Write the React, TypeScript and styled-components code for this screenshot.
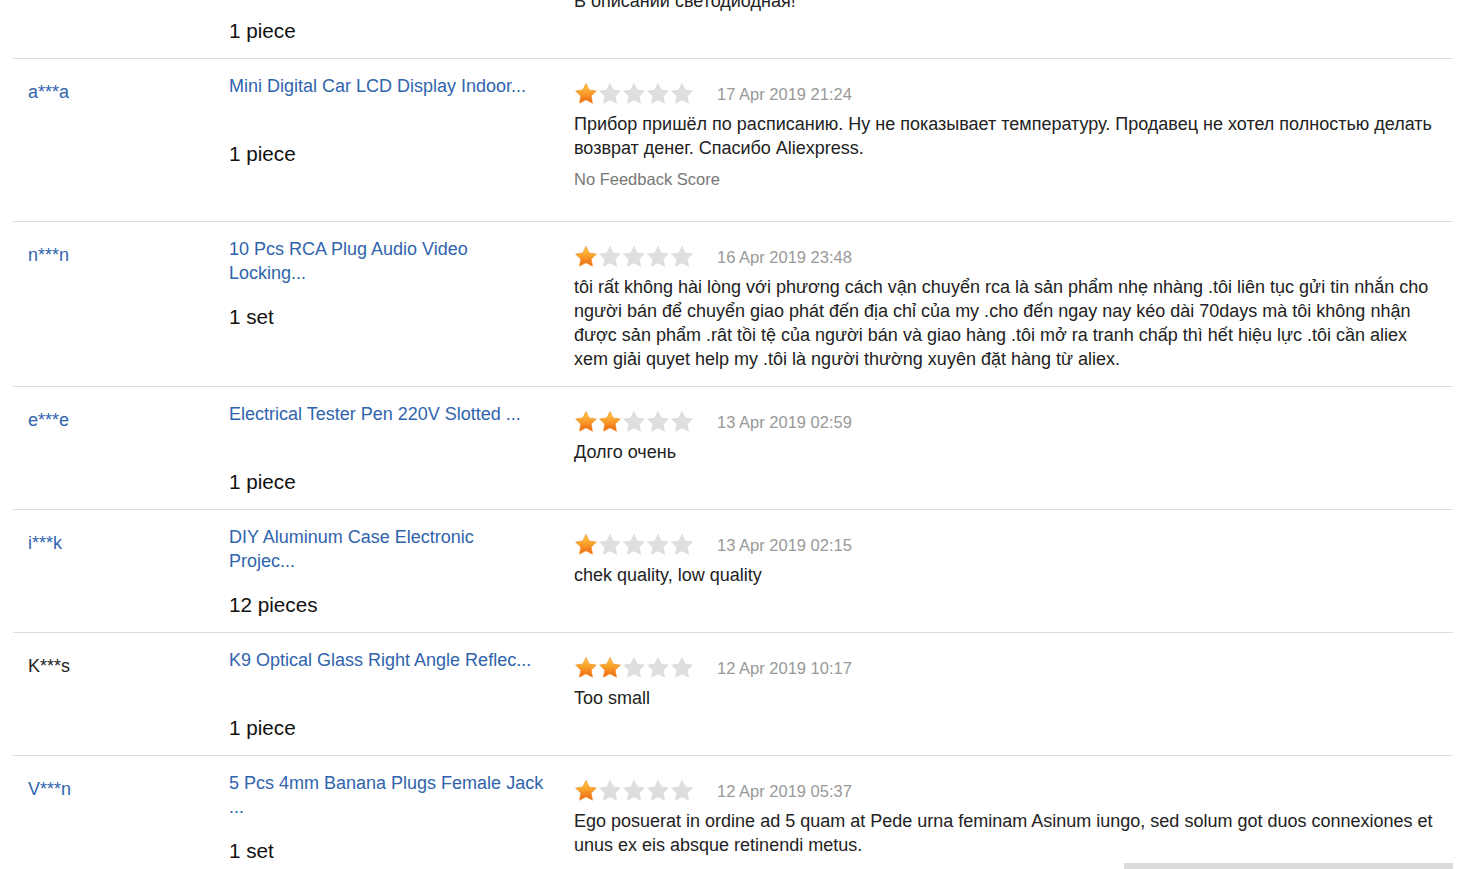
import React from 'react'
import styled, { createGlobalStyle } from 'styled-components'

type Review = {
  buyer: string
  buyerLink?: boolean
  product: string
  quantity: string
  rating: number
  date: string
  text: string
  noScore?: boolean
}

const reviews: Review[] = [
  {
    buyer: 'o***a',
    buyerLink: true,
    product: 'LED Indicator Lamp 12V Panel...',
    quantity: '1 piece',
    rating: 1,
    date: '18 Apr 2019 09:12',
    text: 'В описании светодиодная!',
  },
  {
    buyer: 'a***a',
    buyerLink: true,
    product: 'Mini Digital Car LCD Display Indoor...',
    quantity: '1 piece',
    rating: 1,
    date: '17 Apr 2019 21:24',
    text: 'Прибор пришёл по расписанию. Ну не показывает температуру. Продавец не хотел полностью делать возврат денег. Спасибо Aliexpress.',
    noScore: true,
  },
  {
    buyer: 'n***n',
    buyerLink: true,
    product: '10 Pcs RCA Plug Audio Video Locking...',
    quantity: '1 set',
    rating: 1,
    date: '16 Apr 2019 23:48',
    text: 'tôi rất không hài lòng với phương cách vận chuyển rca là sản phẩm nhẹ nhàng .tôi liên tục gửi tin nhắn cho người bán để chuyển giao phát đến địa chỉ của my .cho đến ngay nay kéo dài 70days mà tôi không nhận được sản phẩm .rât tồi tệ của người bán và giao hàng .tôi mở ra tranh chấp thì hết hiệu lực .tôi cần aliex xem giải quyet help my .tôi là người thường xuyên đặt hàng từ aliex.',
  },
  {
    buyer: 'e***e',
    buyerLink: true,
    product: 'Electrical Tester Pen 220V Slotted ...',
    quantity: '1 piece',
    rating: 2,
    date: '13 Apr 2019 02:59',
    text: 'Долго очень',
  },
  {
    buyer: 'i***k',
    buyerLink: true,
    product: 'DIY Aluminum Case Electronic Projec...',
    quantity: '12 pieces',
    rating: 1,
    date: '13 Apr 2019 02:15',
    text: 'chek quality, low quality',
  },
  {
    buyer: 'K***s',
    product: 'K9 Optical Glass Right Angle Reflec...',
    quantity: '1 piece',
    rating: 2,
    date: '12 Apr 2019 10:17',
    text: 'Too small',
  },
  {
    buyer: 'V***n',
    buyerLink: true,
    product: '5 Pcs 4mm Banana Plugs Female Jack ...',
    quantity: '1 set',
    rating: 1,
    date: '12 Apr 2019 05:37',
    text: 'Ego posuerat in ordine ad 5 quam at Pede urna feminam Asinum iungo, sed solum got duos connexiones et unus ex eis absque retinendi metus.',
  },
]

const GlobalStyle = createGlobalStyle`
  html, body {
    margin: 0;
    padding: 0;
    background: #fff;
    overflow: hidden;
  }
  body {
    font-family: "Liberation Sans", Arial, sans-serif;
    color: #222;
  }
`

const Star = ({ filled, id }: { filled: boolean; id: string }) => (
  <svg width="24" height="24" viewBox="0 0 24 24">
    <defs>
      <linearGradient id={id} x1="0" y1="0" x2="0" y2="1">
        <stop offset="0" stopColor="#ffc947" />
        <stop offset="0.45" stopColor="#f9a22c" />
        <stop offset="1" stopColor="#ec640e" />
      </linearGradient>
    </defs>
    <path
      d="M12 1.4l3.2 6.6 7.2 1-5.2 5 1.3 7.2L12 17.8l-6.5 3.4 1.3-7.2-5.2-5 7.2-1z"
      fill={filled ? `url(#${id})` : '#dedede'}
      stroke={filled ? '#ef8a1e' : '#d6d6d6'}
      strokeWidth="0.6"
      strokeLinejoin="round"
    />
  </svg>
)

const Stars = ({ rating, rowKey }: { rating: number; rowKey: number }) => (
  <StarRow>
    {[0, 1, 2, 3, 4].map((i) => (
      <Star key={i} filled={i < rating} id={`sg-${rowKey}-${i}`} />
    ))}
  </StarRow>
)

export default function App() {
  return (
    <>
      <GlobalStyle />
      <Feedback>
        {reviews.map((r, i) => (
          <Row key={i}>
            <Buyer $link={!!r.buyerLink}>{r.buyer}</Buyer>
            <ProductCell>
              <ProductLink href="#">{r.product}</ProductLink>
              <Quantity>{r.quantity}</Quantity>
            </ProductCell>
            <ReviewCell>
              <ReviewHead>
                <Stars rating={r.rating} rowKey={i} />
                <DateText>{r.date}</DateText>
              </ReviewHead>
              <ReviewText>{r.text}</ReviewText>
              {r.noScore && <NoScore>No Feedback Score</NoScore>}
            </ReviewCell>
          </Row>
        ))}
      </Feedback>
      <ScrollTrack />
    </>
  )
}

const Feedback = styled.div`
  width: 1440px;
  margin: -64px 0 0 13px;
`

const Row = styled.div`
  display: grid;
  grid-template-columns: 201px 345px 866px;
  padding: 15px 0 13px 15px;
  border-bottom: 1px solid #dedede;
`

const Buyer = styled.div<{ $link: boolean }>`
  font-size: 18px;
  line-height: 24px;
  margin-top: 6px;
  color: ${({ $link }) => ($link ? '#3065ae' : '#222')};
`

const ProductCell = styled.div`
  display: flex;
  flex-direction: column;
`

const ProductLink = styled.a`
  display: block;
  width: 315px;
  min-height: 48px;
  font-size: 18px;
  line-height: 24px;
  color: #2f64ad;
  text-decoration: none;
`

const Quantity = styled.div`
  margin-top: 18px;
  font-size: 20.7px;
  line-height: 28px;
  color: #111;
`

const ReviewCell = styled.div`
  display: flex;
  flex-direction: column;
`

const ReviewHead = styled.div`
  display: flex;
  align-items: center;
  height: 24px;
  margin: 8px 0 6px;
`

const StarRow = styled.div`
  display: flex;
  margin-right: 23px;
`

const DateText = styled.span`
  font-size: 16.5px;
  color: #999;
`

const ReviewText = styled.p`
  margin: 0 0 2px;
  font-size: 18px;
  line-height: 24px;
  color: #222;
`

const NoScore = styled.div`
  margin: 5px 0 17px;
  font-size: 16.5px;
  line-height: 24px;
  color: #777;
`

const ScrollTrack = styled.div`
  position: fixed;
  left: 1124px;
  bottom: 0;
  width: 329px;
  height: 6px;
  background: #dcdcdc;
`
